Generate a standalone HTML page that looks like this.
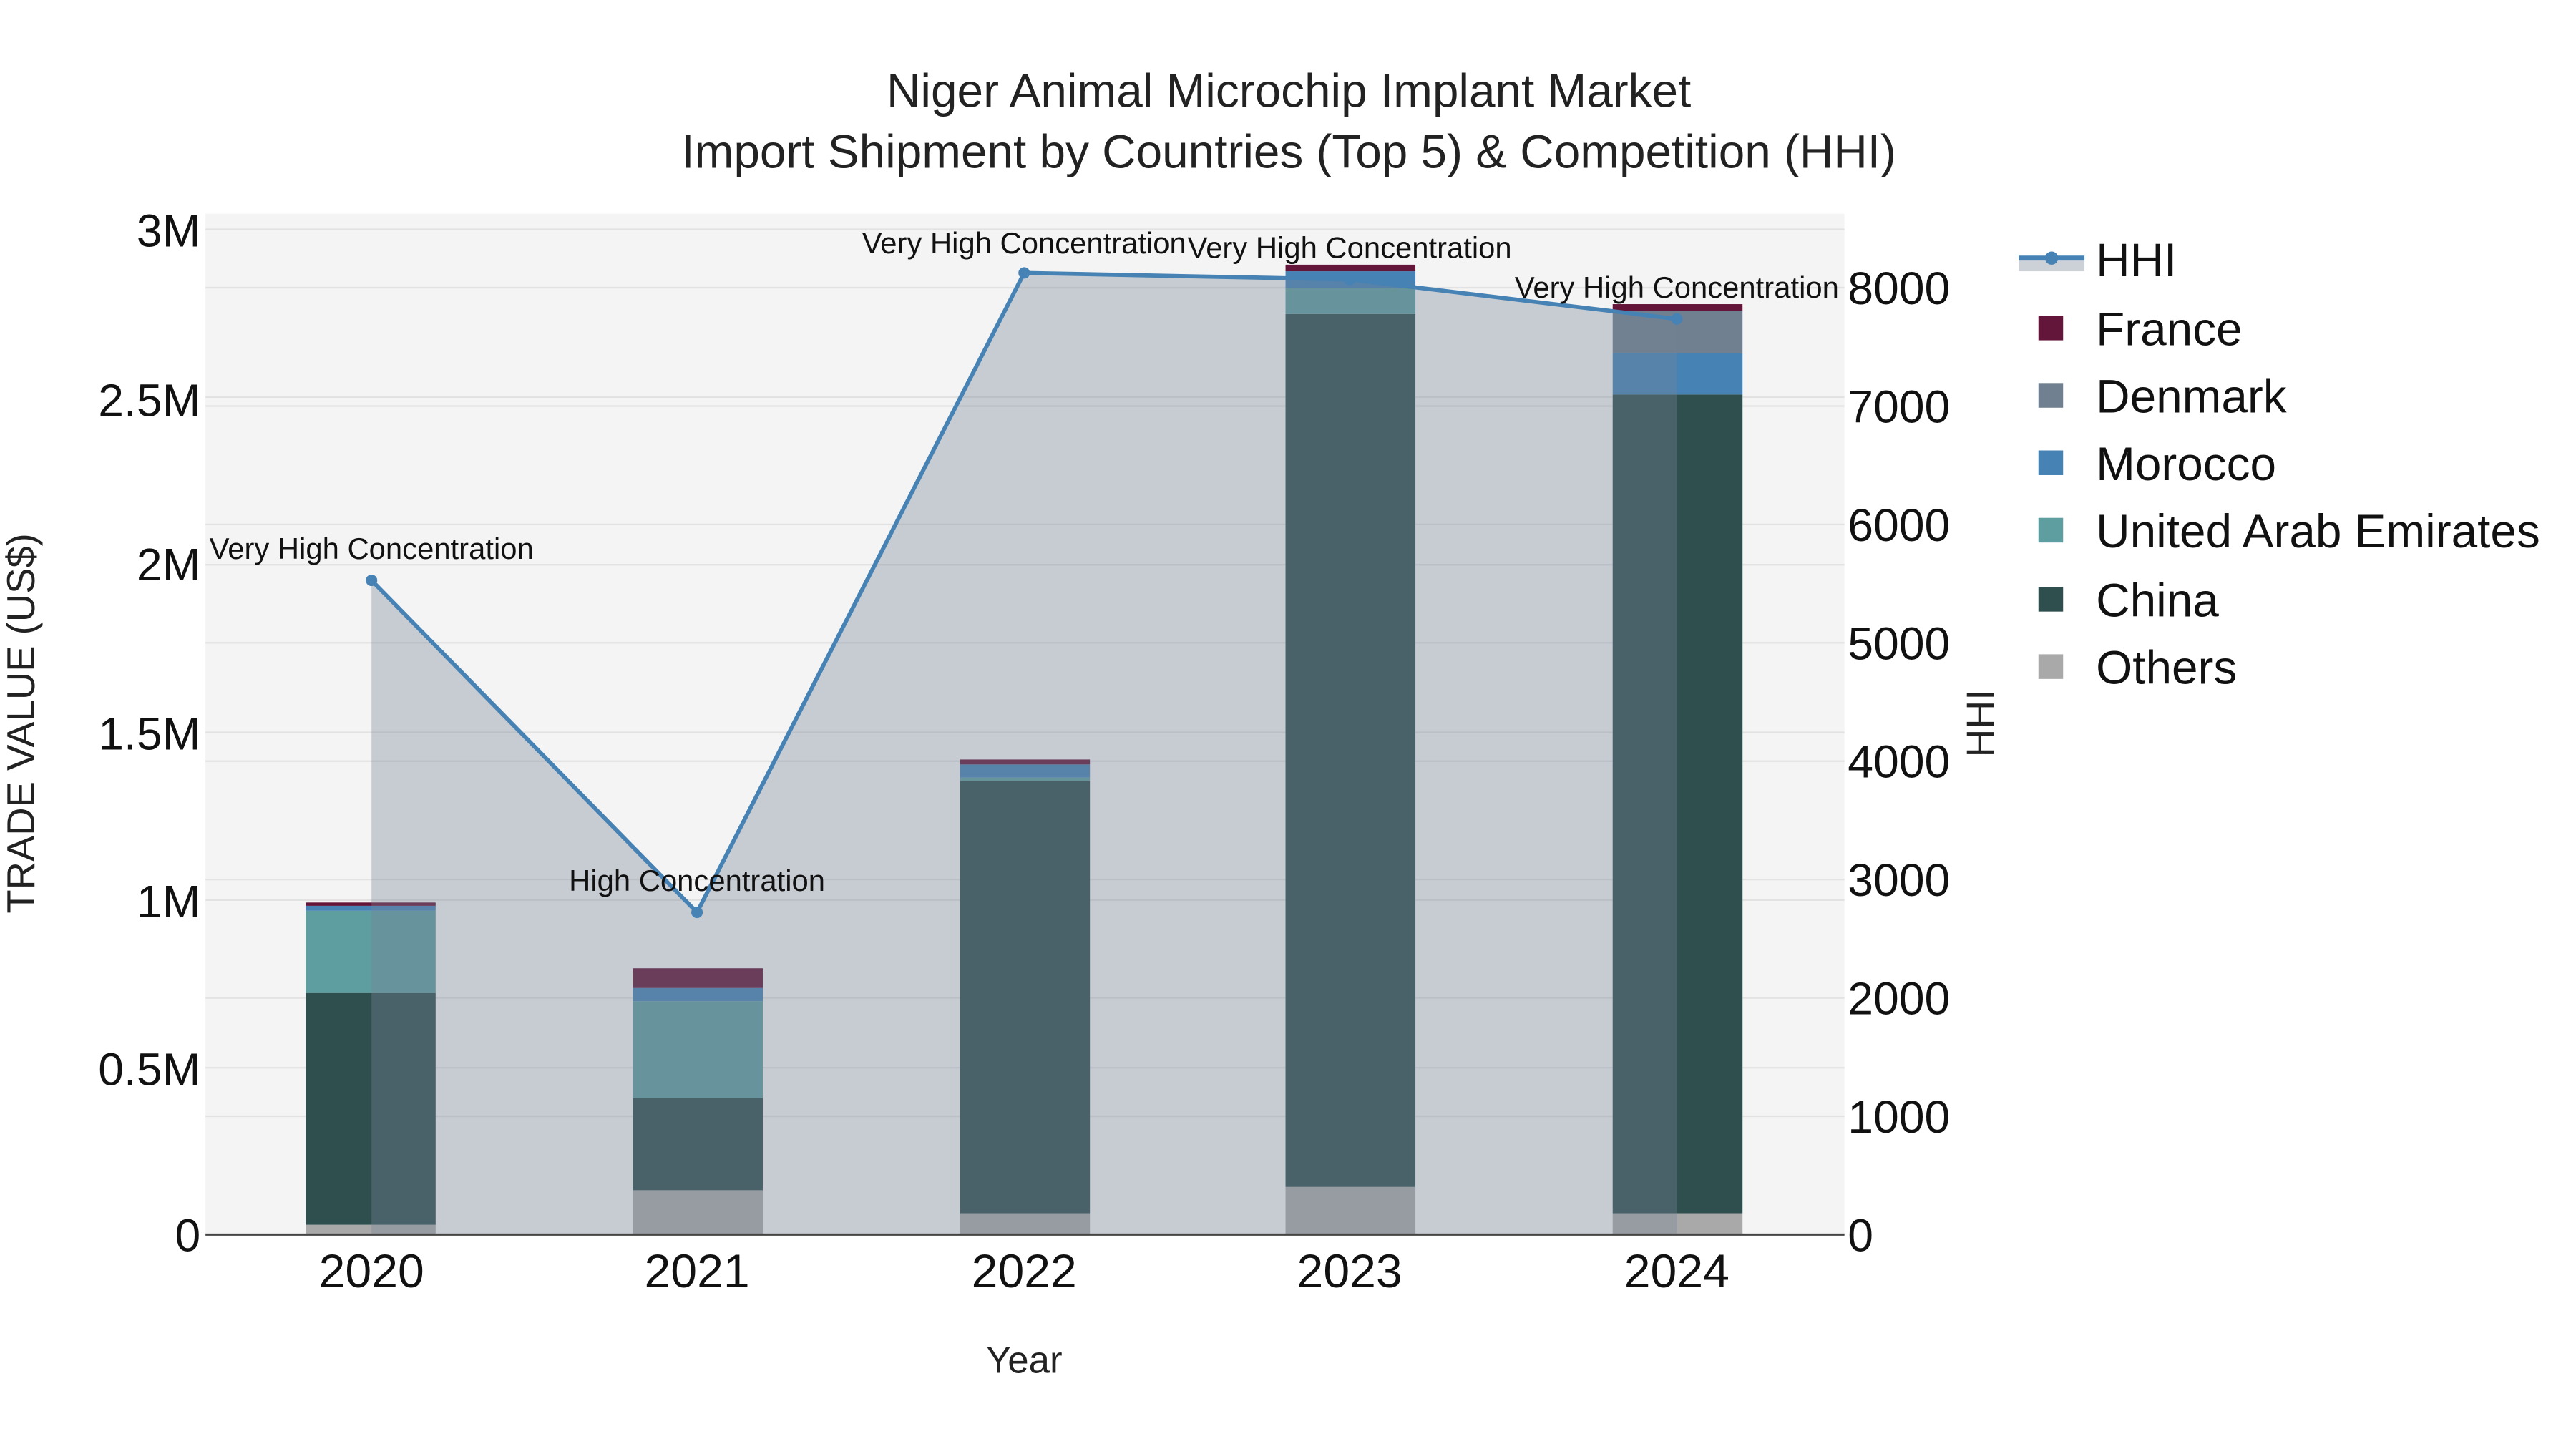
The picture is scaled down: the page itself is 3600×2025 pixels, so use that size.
<!DOCTYPE html>
<html><head><meta charset="utf-8"><style>html,body{margin:0;padding:0;background:#fff}svg{display:block}</style></head>
<body>
<svg width="3600" height="2025" viewBox="0 0 1567 881.4" preserveAspectRatio="none" xmlns="http://www.w3.org/2000/svg" font-family="Liberation Sans, sans-serif">
<rect x="0" y="0" width="1567" height="882" fill="#fff"/>
<rect x="125" y="130" width="997" height="621" fill="#f4f4f4"/>
<g stroke="#e2e2e2" stroke-width="1">
<line x1="125" x2="1122" y1="649.5" y2="649.5"/><line x1="125" x2="1122" y1="547.5" y2="547.5"/>
<line x1="125" x2="1122" y1="445.5" y2="445.5"/><line x1="125" x2="1122" y1="343.5" y2="343.5"/>
<line x1="125" x2="1122" y1="241.5" y2="241.5"/><line x1="125" x2="1122" y1="139.5" y2="139.5"/>
<line x1="125" x2="1122" y1="679" y2="679"/><line x1="125" x2="1122" y1="607" y2="607"/>
<line x1="125" x2="1122" y1="535" y2="535"/><line x1="125" x2="1122" y1="463" y2="463"/>
<line x1="125" x2="1122" y1="391" y2="391"/><line x1="125" x2="1122" y1="319" y2="319"/>
<line x1="125" x2="1122" y1="247" y2="247"/><line x1="125" x2="1122" y1="175" y2="175"/>
</g>
<g>
<rect x="186" y="745" width="79" height="6" fill="#a9a9a9"/>
<rect x="186" y="604" width="79" height="141" fill="#2f4f4f"/>
<rect x="186" y="554" width="79" height="50" fill="#5f9ea0"/>
<rect x="186" y="551" width="79" height="3" fill="#4682b4"/>
<rect x="186" y="549" width="79" height="2" fill="#63163a"/>

<rect x="385" y="724" width="79" height="27" fill="#a9a9a9"/>
<rect x="385" y="668" width="79" height="56" fill="#2f4f4f"/>
<rect x="385" y="609" width="79" height="59" fill="#5f9ea0"/>
<rect x="385" y="601" width="79" height="8" fill="#4682b4"/>
<rect x="385" y="589" width="79" height="12" fill="#63163a"/>

<rect x="584" y="738" width="79" height="13" fill="#a9a9a9"/>
<rect x="584" y="475" width="79" height="263" fill="#2f4f4f"/>
<rect x="584" y="473" width="79" height="2" fill="#5f9ea0"/>
<rect x="584" y="465" width="79" height="8" fill="#4682b4"/>
<rect x="584" y="462" width="79" height="3" fill="#63163a"/>

<rect x="782" y="722" width="79" height="29" fill="#a9a9a9"/>
<rect x="782" y="191" width="79" height="531" fill="#2f4f4f"/>
<rect x="782" y="175" width="79" height="16" fill="#5f9ea0"/>
<rect x="782" y="165" width="79" height="10" fill="#4682b4"/>
<rect x="782" y="161" width="79" height="4" fill="#63163a"/>

<rect x="981" y="738" width="79" height="13" fill="#a9a9a9"/>
<rect x="981" y="240" width="79" height="498" fill="#2f4f4f"/>
<rect x="981" y="215" width="79" height="25" fill="#4682b4"/>
<rect x="981" y="189" width="79" height="26" fill="#708090"/>
<rect x="981" y="185" width="79" height="4" fill="#63163a"/>
</g>
<polygon points="226,353 424,555 623,166 821,170 1020,194 1020,751 226,751" fill="rgb(118,130,150)" fill-opacity="0.36"/>
<polyline points="226,353 424,555 623,166 821,170 1020,194" fill="none" stroke="#4682b4" stroke-width="2.5"/>
<g fill="#4682b4"><circle cx="226" cy="353" r="3.5"/><circle cx="424" cy="555" r="3.5"/><circle cx="623" cy="166" r="3.5"/><circle cx="821" cy="170" r="3.5"/><circle cx="1020" cy="194" r="3.5"/></g>
<line x1="125" x2="1122" y1="751" y2="751" stroke="#444" stroke-width="1.3"/>
<g font-size="18.2" fill="#111" text-anchor="middle">
<text x="226" y="340">Very High Concentration</text>
<text x="424" y="542">High Concentration</text>
<text x="623" y="154">Very High Concentration</text>
<text x="821" y="157">Very High Concentration</text>
<text x="1020" y="181">Very High Concentration</text>
</g>
<g font-size="28.6" fill="#222" text-anchor="middle">
<text x="784" y="65">Niger Animal Microchip Implant Market</text>
<text x="784" y="102">Import Shipment by Countries (Top 5) &amp; Competition (HHI)</text>
</g>
<g font-size="28" fill="#111" text-anchor="end">
<text x="122" y="150">3M</text><text x="122" y="253">2.5M</text><text x="122" y="353">2M</text>
<text x="122" y="456">1.5M</text><text x="122" y="558">1M</text><text x="122" y="660">0.5M</text><text x="122" y="761">0</text>
</g>
<g font-size="28" fill="#111" text-anchor="start">
<text x="1124" y="185">8000</text><text x="1124" y="257">7000</text><text x="1124" y="329">6000</text>
<text x="1124" y="401">5000</text><text x="1124" y="473">4000</text><text x="1124" y="545">3000</text>
<text x="1124" y="617">2000</text><text x="1124" y="689">1000</text><text x="1124" y="761">0</text>
</g>
<g font-size="28.8" fill="#111" text-anchor="middle">
<text x="226" y="783">2020</text><text x="424" y="783">2021</text><text x="623" y="783">2022</text><text x="821" y="783">2023</text><text x="1020" y="783">2024</text>
</g>
<text x="623" y="835" font-size="23" fill="#222" text-anchor="middle">Year</text>
<text transform="translate(21,440) rotate(-90)" font-size="23.7" fill="#222" text-anchor="middle">TRADE VALUE (US$)</text>
<text transform="translate(1213,440) rotate(-90)" font-size="24" fill="#222" text-anchor="middle">HHI</text>
<rect x="1228" y="157" width="40" height="8" fill="#ccd1d8"/>
<line x1="1228" x2="1268" y1="157" y2="157" stroke="#4682b4" stroke-width="3"/>
<circle cx="1248" cy="157" r="4" fill="#4682b4"/>
<g fill="#111" font-size="28.6">
<text x="1275" y="168">HHI</text>
<rect x="1240" y="192" width="15" height="15" fill="#63163a"/><text x="1275" y="210">France</text>
<rect x="1240" y="233" width="15" height="15" fill="#708090"/><text x="1275" y="251">Denmark</text>
<rect x="1240" y="274" width="15" height="15" fill="#4682b4"/><text x="1275" y="292">Morocco</text>
<rect x="1240" y="315" width="15" height="15" fill="#5f9ea0"/><text x="1275" y="333">United Arab Emirates</text>
<rect x="1240" y="357" width="15" height="15" fill="#2f4f4f"/><text x="1275" y="375">China</text>
<rect x="1240" y="398" width="15" height="15" fill="#a9a9a9"/><text x="1275" y="416">Others</text>
</g>
</svg>
</body></html>
